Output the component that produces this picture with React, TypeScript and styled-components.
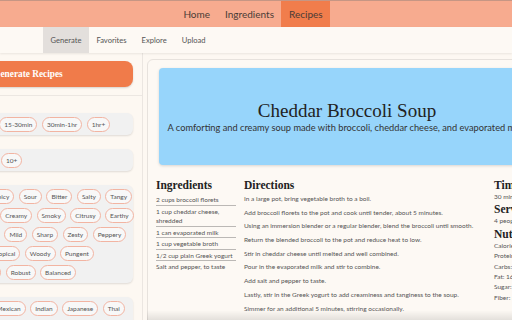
import React from "react";
import styled, { createGlobalStyle } from "styled-components";

const GlobalStyle = createGlobalStyle`
  html, body {
    margin: 0;
    padding: 0;
    background: #fdf8f2;
  }
  body {
    font-family: Lato, "Open Sans", sans-serif;
  }
`;

const Page = styled.div`
  width: 512px;
  height: 320px;
  overflow: hidden;
  display: flex;
  flex-direction: column;
  background: #fdf8f2;
`;

const TopNav = styled.nav`
  flex: none;
  height: 27px;
  box-sizing: border-box;
  border-top: 1px solid #c69684;
  background: #f7ab8f;
  display: flex;
  justify-content: center;
  padding-right: 6px;
`;

const NavItem = styled.a<{ $active?: boolean }>`
  display: flex;
  align-items: center;
  padding: 0 7.5px;
  font-size: 10px;
  color: #4a3b36;
  background: ${props => (props.$active ? "#f17d4c" : "transparent")};
`;

const SubNav = styled.div`
  flex: none;
  height: 26px;
  display: flex;
  padding-left: 43px;
  background: #fdf9f4;
  box-shadow: 0 1px 2px rgba(0, 0, 0, 0.08);
  position: relative;
  z-index: 1;
`;

const SubNavItem = styled.a<{ $active?: boolean }>`
  display: flex;
  align-items: center;
  padding: 0 7.5px;
  font-size: 7.6px;
  color: #555;
  background: ${props => (props.$active ? "#e3dfdc" : "transparent")};
`;

const Content = styled.div`
  flex: 1;
  min-height: 0;
  display: flex;
`;

const Sidebar = styled.aside`
  flex: 0 0 228px;
  width: 228px;
  min-width: 0;
  margin-left: -85px;
  box-sizing: border-box;
  padding: 8px 9px 0 8px;
  border-right: 1px solid #ebe6e1;
  display: flex;
  flex-direction: column;
  overflow: hidden;
`;

const GenerateButton = styled.button`
  flex: none;
  height: 26px;
  border: none;
  border-radius: 8px;
  background: #f07b4a;
  color: #fff;
  font-family: "Liberation Serif", serif;
  font-weight: bold;
  font-size: 9.3px;
  box-shadow: 0 1px 2px rgba(0, 0, 0, 0.15);
`;

const Divider = styled.hr`
  margin: 8px -9px 17px -8px;
  border: none;
  border-top: 1px solid #ece7e2;
`;

const FilterGroup = styled.div`
  display: flex;
  align-items: flex-start;
  gap: 4px;
  padding: 4px 4px 3px;
  margin-bottom: 14px;
  background: #f1f1f1;
  border-radius: 6px;
  box-shadow: 0 1px 2px rgba(0, 0, 0, 0.12);
`;

const GroupLabel = styled.span<{ $width: number }>`
  flex: 0 0 ${props => props.$width}px;
  font-size: 7px;
  line-height: 15px;
  color: #666;
`;

const ChipRows = styled.div`
  display: flex;
  flex-direction: column;
  gap: 4px;
`;

const ChipRow = styled.div`
  display: flex;
  gap: 4.5px;
`;

const Chip = styled.span`
  flex: none;
  height: 15px;
  box-sizing: border-box;
  padding: 0 4px;
  border: 1px solid #f2b4a2;
  border-radius: 8px;
  background: #f8f8f8;
  font-size: 6.5px;
  line-height: 13px;
  color: #555;
  white-space: nowrap;
`;

const Main = styled.main`
  flex: 1;
  min-width: 0;
  position: relative;
  padding: 6px 0 0 4px;
`;

const RecipeCard = styled.article`
  width: 400px;
  box-sizing: border-box;
  padding: 8px 8px 0;
  border: 1px solid #e7e2dd;
  border-radius: 6px;
  background: #fdf9f4;
`;

const Hero = styled.header`
  margin: 0 3px;
  height: 97px;
  border-radius: 4px;
  background: #97d5fb;
  box-shadow: 0 1px 3px rgba(0, 0, 0, 0.15);
  display: flex;
  flex-direction: column;
  justify-content: center;
  text-align: center;
`;

const Title = styled.h1`
  margin: 0;
  font-family: "Liberation Serif", serif;
  font-weight: normal;
  font-size: 19px;
  line-height: 22px;
  color: #222;
`;

const Subtitle = styled.p`
  margin: 0;
  font-size: 9.25px;
  line-height: 12px;
  color: #333;
  white-space: nowrap;
`;

const Columns = styled.div`
  display: flex;
  gap: 8px;
  margin-top: 13px;
`;

const Column = styled.section<{ $width: number }>`
  flex: 0 0 ${props => props.$width}px;
`;

const Heading = styled.h2`
  margin: 0;
  font-family: "Liberation Serif", serif;
  font-weight: bold;
  font-size: 11.5px;
  line-height: 14px;
  color: #222;
  white-space: nowrap;
`;

const IngredientList = styled.ul`
  list-style: none;
  margin: 2px 0 0;
  padding: 0;
`;

const Ingredient = styled.li`
  padding-top: 1px;
  font-size: 6.5px;
  line-height: 9.5px;
  color: #555;
  border-bottom: 1px solid #bbb8b5;
  &:last-child {
    border-bottom: none;
  }
`;

const Steps = styled.ol`
  list-style: none;
  margin: 2px 0 0;
  padding: 0;
`;

const Step = styled.li`
  margin-bottom: 3.7px;
  font-size: 6.5px;
  line-height: 10px;
  color: #555;
`;

const Fact = styled.p`
  margin: 0;
  font-size: 6.5px;
  line-height: 10.4px;
  color: #555;
  white-space: nowrap;
`;

const BottomFade = styled.div`
  position: absolute;
  left: 4px;
  right: 0;
  bottom: 0;
  height: 10px;
  background: linear-gradient(rgba(0, 0, 0, 0), rgba(0, 0, 0, 0.1));
  pointer-events: none;
`;

const filters: { label: string; labelWidth: number; rows: string[][] }[] = [
  { label: "Time", labelWidth: 32, rows: [["<15min", "15-30min", "30min-1hr", "1hr+"]] },
  { label: "Serves", labelWidth: 21, rows: [["1-4", "5-9", "10+"]] },
  {
    label: "Flavor",
    labelWidth: 26,
    rows: [
      ["Sweet", "Spicy", "Sour", "Bitter", "Salty", "Tangy"],
      ["Aromatics", "Creamy", "Smoky", "Citrusy", "Earthy"],
      ["Bittersweet", "Mild", "Sharp", "Zesty", "Peppery"],
      ["Fruity", "Tropical", "Woody", "Pungent"],
      ["Herbaceous", "Robust", "Balanced"],
    ],
  },
  {
    label: "Cuisine",
    labelWidth: 29,
    rows: [
      ["Greek", "Mexican", "Indian", "Japanese", "Thai"],
      ["Korean", "Caribbean", "Mediterranean"],
    ],
  },
];

const ingredients = [
  "2 cups broccoli florets",
  "1 cup cheddar cheese, shredded",
  "1 can evaporated milk",
  "1 cup vegetable broth",
  "1/2 cup plain Greek yogurt",
  "Salt and pepper, to taste",
];

const steps = [
  "In a large pot, bring vegetable broth to a boil.",
  "Add broccoli florets to the pot and cook until tender, about 5 minutes.",
  "Using an immersion blender or a regular blender, blend the broccoli until smooth.",
  "Return the blended broccoli to the pot and reduce heat to low.",
  "Stir in cheddar cheese until melted and well combined.",
  "Pour in the evaporated milk and stir to combine.",
  "Add salt and pepper to taste.",
  "Lastly, stir in the Greek yogurt to add creaminess and tanginess to the soup.",
  "Simmer for an additional 5 minutes, stirring occasionally.",
  "Serve hot and enjoy!",
];

const nutrition = ["Calories: 280", "Protein: 18g", "Carbs: 14g", "Fat: 16g", "Sugar: 9g", "Fiber: 3g"];

export default function App() {
  return (
    <Page>
      <GlobalStyle />
      <TopNav>
        <NavItem>Home</NavItem>
        <NavItem>Ingredients</NavItem>
        <NavItem $active>Recipes</NavItem>
      </TopNav>
      <SubNav>
        <SubNavItem $active>Generate</SubNavItem>
        <SubNavItem>Favorites</SubNavItem>
        <SubNavItem>Explore</SubNavItem>
        <SubNavItem>Upload</SubNavItem>
      </SubNav>
      <Content>
        <Sidebar>
          <GenerateButton>Generate Recipes</GenerateButton>
          <Divider />
          {filters.map(group => (
            <FilterGroup key={group.label}>
              <GroupLabel $width={group.labelWidth}>{group.label}</GroupLabel>
              <ChipRows>
                {group.rows.map((row, i) => (
                  <ChipRow key={i}>
                    {row.map(chip => (
                      <Chip key={chip}>{chip}</Chip>
                    ))}
                  </ChipRow>
                ))}
              </ChipRows>
            </FilterGroup>
          ))}
        </Sidebar>
        <Main>
          <RecipeCard>
            <Hero>
              <Title>Cheddar Broccoli Soup</Title>
              <Subtitle>
                A comforting and creamy soup made with broccoli, cheddar cheese, and evaporated milk.
              </Subtitle>
            </Hero>
            <Columns>
              <Column $width={80}>
                <Heading>Ingredients</Heading>
                <IngredientList>
                  {ingredients.map(item => (
                    <Ingredient key={item}>{item}</Ingredient>
                  ))}
                </IngredientList>
              </Column>
              <Column $width={242}>
                <Heading>Directions</Heading>
                <Steps>
                  {steps.map(step => (
                    <Step key={step}>{step}</Step>
                  ))}
                </Steps>
              </Column>
              <Column $width={60}>
                <Heading>Time</Heading>
                <Fact>30 minutes</Fact>
                <Heading>Servings</Heading>
                <Fact>4 people</Fact>
                <Heading>Nutrition</Heading>
                {nutrition.map(n => (
                  <Fact key={n}>{n}</Fact>
                ))}
              </Column>
            </Columns>
          </RecipeCard>
          <BottomFade />
        </Main>
      </Content>
    </Page>
  );
}
